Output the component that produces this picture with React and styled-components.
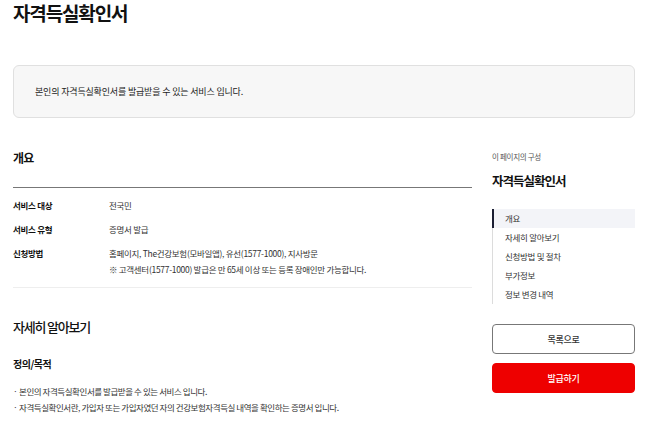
import React from 'react';
import styled, { createGlobalStyle } from 'styled-components';

const Global = createGlobalStyle`
  body {
    margin: 0;
    background: #ffffff;
    font-family: "Noto Sans CJK KR", "Noto Sans", sans-serif;
    color: #111111;
  }
`;

const Page = styled.div`
  width: 622px;
  padding-left: 13px;
`;

const Title = styled.h1`
  margin: 0;
  font-size: 19px;
  line-height: 26px;
  font-weight: 700;
  letter-spacing: -1.15px;
  color: #111;
`;

const InfoBox = styled.div`
  margin-top: 39px;
  height: 53px;
  box-sizing: border-box;
  display: flex;
  align-items: center;
  padding: 0 21px;
  background: #f7f7f7;
  border: 1px solid #e0e0e0;
  border-radius: 6px;
  font-size: 9px;
  letter-spacing: -0.17px;
  color: #222;
`;

const Layout = styled.div`
  display: grid;
  grid-template-columns: 459px 143px;
  column-gap: 20px;
  margin-top: 31px;
`;

const Main = styled.section``;

const SectionTitle = styled.h2`
  margin: ${(p) => p.$top || 0}px 0 0;
  font-size: ${(p) => p.$size || 12}px;
  line-height: 18px;
  font-weight: ${(p) => p.$weight || 700};
  letter-spacing: ${(p) => p.$spacing || -0.8}px;
  color: #111;
`;

const Table = styled.div`
  margin-top: 20px;
  border-top: 1px solid #777;
  border-bottom: 1px solid #eee;
  padding: 9px 0 10px;
  display: flex;
  flex-direction: column;
  gap: 8px;
`;

const Row = styled.div`
  display: grid;
  grid-template-columns: 96px 1fr;
  font-size: 8.5px;
  line-height: 16px;
  letter-spacing: -0.3px;
`;

const Label = styled.div`
  font-weight: 700;
  color: #111;
`;

const Value = styled.div`
  color: #333;
`;

const SubTitle = styled.h3`
  margin: 21px 0 0;
  font-size: 10px;
  line-height: 14px;
  font-weight: 700;
  letter-spacing: -0.5px;
`;

const Bullets = styled.ul`
  margin: 12px 0 0;
  padding: 0;
  list-style: none;
  font-size: 8.5px;
  line-height: 16px;
  letter-spacing: -0.44px;
  color: #333;
`;

const Bullet = styled.li`
  position: relative;
  padding-left: 6px;
  &::before {
    content: '·';
    position: absolute;
    left: 0;
  }
`;

const Side = styled.aside``;

const SideCaption = styled.div`
  margin-top: 1px;
  font-size: 7.5px;
  line-height: 14px;
  color: #555;
  letter-spacing: -0.3px;
`;

const SideTitle = styled.div`
  margin-top: 8px;
  font-size: 12.5px;
  line-height: 18px;
  font-weight: 700;
  letter-spacing: -1px;
`;

const Nav = styled.ul`
  margin: 19px 0 0;
  padding: 0;
  list-style: none;
`;

const NavItem = styled.li`
  height: 19px;
  line-height: 19px;
  box-sizing: border-box;
  padding-left: ${(p) => (p.$active ? 11 : 12)}px;
  border-left: ${(p) => (p.$active ? '2px solid #1c1f33' : '1px solid #dcdcdc')};
  background: ${(p) => (p.$active ? '#f3f4f8' : 'transparent')};
  font-size: 8.5px;
  letter-spacing: -0.3px;
  color: #333;
`;

const Button = styled.button`
  display: block;
  width: 100%;
  height: 30px;
  margin-top: ${(p) => p.$top}px;
  border-radius: 4px;
  border: 1px solid ${(p) => (p.$primary ? '#ee0000' : '#777')};
  background: ${(p) => (p.$primary ? '#ee0000' : '#fff')};
  color: ${(p) => (p.$primary ? '#fff' : '#333')};
  font-family: inherit;
  font-size: 9px;
  font-weight: 500;
  letter-spacing: -0.3px;
  cursor: pointer;
`;

const navItems = ['개요', '자세히 알아보기', '신청방법 및 절차', '부가정보', '정보 변경 내역'];

export default function App() {
  return (
    <Page>
      <Global />
      <Title>자격득실확인서</Title>
      <InfoBox>본인의 자격득실확인서를 발급받을 수 있는 서비스 입니다.</InfoBox>
      <Layout>
        <Main>
          <SectionTitle>개요</SectionTitle>
          <Table>
            <Row>
              <Label>서비스 대상</Label>
              <Value>전국민</Value>
            </Row>
            <Row>
              <Label>서비스 유형</Label>
              <Value>증명서 발급</Value>
            </Row>
            <Row>
              <Label>신청방법</Label>
              <Value>
                홈페이지, The건강보험(모바일앱), 유선(1577-1000), 지사방문
                <br />※ 고객센터(1577-1000) 발급은 만 65세 이상 또는 등록 장애인만 가능합니다.
              </Value>
            </Row>
          </Table>
          <SectionTitle $top={30} $size={13} $weight={500} $spacing={-1.2}>자세히 알아보기</SectionTitle>
          <SubTitle>정의/목적</SubTitle>
          <Bullets>
            <Bullet>본인의 자격득실확인서를 발급받을 수 있는 서비스 입니다.</Bullet>
            <Bullet>자격득실확인서란, 가입자 또는 가입자였던 자의 건강보험자격득실 내역을 확인하는 증명서 입니다.</Bullet>
          </Bullets>
        </Main>
        <Side>
          <SideCaption>이 페이지의 구성</SideCaption>
          <SideTitle>자격득실확인서</SideTitle>
          <Nav>
            {navItems.map((item, i) => (
              <NavItem key={item} $active={i === 0}>{item}</NavItem>
            ))}
          </Nav>
          <Button $top={20}>목록으로</Button>
          <Button $top={9} $primary>발급하기</Button>
        </Side>
      </Layout>
    </Page>
  );
}
